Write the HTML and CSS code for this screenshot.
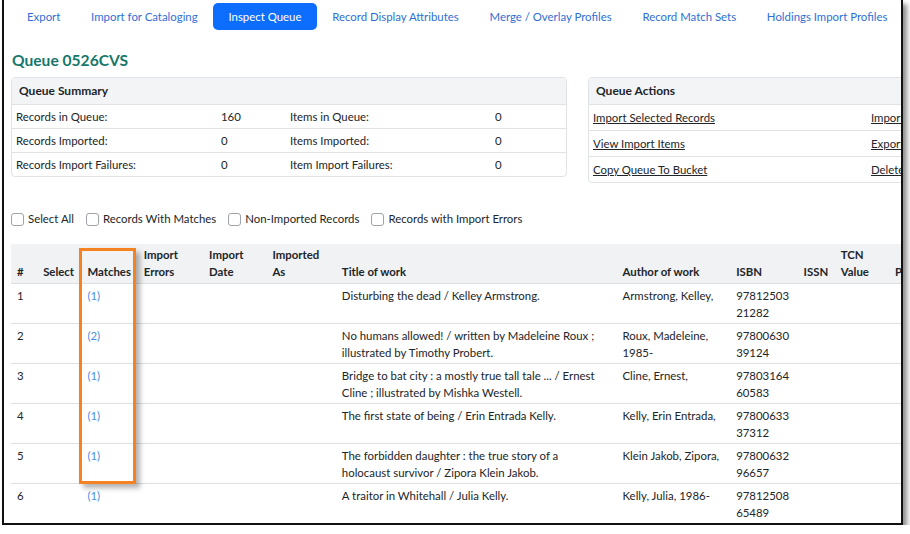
FILE: index.html
```html
<!DOCTYPE html>
<html lang="en">
<head>
  <meta charset="UTF-8" />
  <title>Inspect Queue</title>
  <link rel="stylesheet" href="styles.css">
</head>
<body>

<div class="shot">

  <nav class="tabs">
    <a href="#">Export</a>
    <a href="#">Import for Cataloging</a>
    <a href="#" class="active">Inspect Queue</a>
    <a href="#">Record Display Attributes</a>
    <a href="#">Merge / Overlay Profiles</a>
    <a href="#">Record Match Sets</a>
    <a href="#">Holdings Import Profiles</a>
  </nav>

  <h2 class="queue-title">Queue 0526CVS</h2>

  <div class="cards">
    <div class="card">
      <div class="card-head">Queue Summary</div>
      <table class="card-table">
        <tr>
          <td>Records in Queue:</td><td class="num">160</td>
          <td>Items in Queue:</td><td class="num">0</td>
        </tr>
        <tr>
          <td>Records Imported:</td><td class="num">0</td>
          <td>Items Imported:</td><td class="num">0</td>
        </tr>
        <tr>
          <td>Records Import Failures:</td><td class="num">0</td>
          <td>Item Import Failures:</td><td class="num">0</td>
        </tr>
      </table>
    </div>

    <div class="card actions">
      <div class="card-head">Queue Actions</div>
      <table class="card-table">
        <tr>
          <td><a href="#">Import Selected Records</a></td>
          <td><a href="#">Import All Records</a></td>
        </tr>
        <tr>
          <td><a href="#">View Import Items</a></td>
          <td><a href="#">Export Non-Imported Records</a></td>
        </tr>
        <tr>
          <td><a href="#">Copy Queue To Bucket</a></td>
          <td><a href="#">Delete Queue</a></td>
        </tr>
      </table>
    </div>
  </div>

  <div class="filters">
    <label><input type="checkbox"> Select All</label>
    <label><input type="checkbox"> Records With Matches</label>
    <label><input type="checkbox"> Non-Imported Records</label>
    <label><input type="checkbox"> Records with Import Errors</label>
  </div>

  <div class="grid-wrap">
    <table class="records">
      <colgroup>
        <col style="width:26px"><col style="width:44px"><col style="width:56px">
        <col style="width:65px"><col style="width:63px"><col style="width:69px">
        <col style="width:279px"><col style="width:113px"><col style="width:67px">
        <col style="width:37px"><col style="width:54px"><col style="width:140px">
      </colgroup>
      <thead>
        <tr>
          <th>#</th><th>Select</th><th>Matches</th><th>Import Errors</th>
          <th>Import Date</th><th>Imported As</th><th>Title of work</th>
          <th>Author of work</th><th>ISBN</th><th>ISSN</th><th>TCN Value</th><th>Publisher</th>
        </tr>
      </thead>
      <tbody>
        <tr>
          <td>1</td><td></td><td><a href="#" class="match">(1)</a></td><td></td><td></td><td></td>
          <td class="title">Disturbing the dead / Kelley Armstrong.</td>
          <td>Armstrong, Kelley,</td><td class="isbn">9781250321282</td><td></td><td></td><td></td>
        </tr>
        <tr>
          <td>2</td><td></td><td><a href="#" class="match">(2)</a></td><td></td><td></td><td></td>
          <td class="title">No humans allowed! / written by Madeleine Roux ; illustrated by Timothy Probert.</td>
          <td>Roux, Madeleine, 1985-</td><td class="isbn">9780063039124</td><td></td><td></td><td></td>
        </tr>
        <tr>
          <td>3</td><td></td><td><a href="#" class="match">(1)</a></td><td></td><td></td><td></td>
          <td class="title">Bridge to bat city : a mostly true tall tale ... / Ernest Cline ; illustrated by Mishka Westell.</td>
          <td>Cline, Ernest,</td><td class="isbn">9780316460583</td><td></td><td></td><td></td>
        </tr>
        <tr>
          <td>4</td><td></td><td><a href="#" class="match">(1)</a></td><td></td><td></td><td></td>
          <td class="title">The first state of being / Erin Entrada Kelly.</td>
          <td>Kelly, Erin Entrada,</td><td class="isbn">9780063337312</td><td></td><td></td><td></td>
        </tr>
        <tr>
          <td>5</td><td></td><td><a href="#" class="match">(1)</a></td><td></td><td></td><td></td>
          <td class="title">The forbidden daughter : the true story of a holocaust survivor / Zipora Klein Jakob.</td>
          <td>Klein Jakob, Zipora,</td><td class="isbn">9780063296657</td><td></td><td></td><td></td>
        </tr>
        <tr>
          <td>6</td><td></td><td><a href="#" class="match">(1)</a></td><td></td><td></td><td></td>
          <td class="title">A traitor in Whitehall / Julia Kelly.</td>
          <td>Kelly, Julia, 1986-</td><td class="isbn">9781250865489</td><td></td><td></td><td></td>
        </tr>
      </tbody>
    </table>
    <!-- annotation box round the Matches column -->
    <div class="highlight"></div>
  </div>

</div>

</body>
</html>
```

FILE: styles.css
```css
body {
  margin: 0;
  background: #fff;
  font-family: Lato, "Liberation Sans", sans-serif;
  font-size: 11.4px;
  color: #212529;
}
.shot {
  position: relative;
  margin-left: 2px;
  width: 901px;
  height: 525px;
  box-sizing: border-box;
  border: 2px solid #111;
  border-top: none;
  box-shadow: 4px 4px 5px rgba(0,0,0,0.45);
  overflow: hidden;
  padding: 3px 0 0 7px;
  background: #fff;
}
.tabs {
  display: flex;
  white-space: nowrap;
}
.tabs a {
  display: block;
  padding: 0 15.4px;
  line-height: 27px;
  color: #2f6fd6;
  text-decoration: none;
  border-radius: 5px;
}
.tabs a:first-child {
  padding-left: 16px;
}
.tabs a.active {
  background: #0d6efd;
  color: #fff;
}
.queue-title {
  margin: 0;
  padding: 20px 0 7px 1px;
  font-size: 15.6px;
  line-height: 20px;
  font-weight: 700;
  color: #16776a;
}
.cards {
  display: grid;
  grid-template-columns: 556px 556px;
  gap: 21px;
  align-items: start;
}
.card {
  border: 1px solid #dfe2e6;
  border-radius: 4px;
  overflow: hidden;
}
.card-head {
  background: #f3f4f6;
  padding: 0 7px;
  line-height: 26px;
  font-size: 12px;
  font-weight: 700;
  border-bottom: 1px solid #dfe2e6;
}
.card-table {
  width: 100%;
  border-collapse: collapse;
  table-layout: fixed;
}
.card-table td {
  padding: 0 4px;
  height: 23px;
  border-top: 1px solid #dfe2e6;
  white-space: nowrap;
}
.card-table tr:first-child td {
  border-top: none;
}
.card-table td:nth-child(1) { width: 197px; }
.card-table td:nth-child(2) { width: 61px; }
.card-table td:nth-child(3) { width: 197px; }
.actions .card-table td { width: 270px; height: 25px; }
.actions a {
  color: #212529;
}
.filters {
  display: flex;
  gap: 12px;
  margin: 28px 0 0 0;
  line-height: 16px;
}
.filters label {
  display: flex;
  align-items: center;
  gap: 4px;
}
.filters input {
  appearance: none;
  width: 13px;
  height: 13px;
  margin: 0;
  border: 1px solid #9ea3a9;
  border-radius: 3px;
  background: #fff;
}
.grid-wrap {
  position: relative;
  margin-top: 17px;
}
.records {
  width: 1019px;
  border-collapse: collapse;
  table-layout: fixed;
}
.records th {
  background: #f1f2f4;
  text-align: left;
  vertical-align: bottom;
  font-weight: 700;
  line-height: 17px;
  padding: 2px 6px 3px;
  height: 34px;
  border-bottom: 1px solid #dcdfe3;
}
.records td {
  vertical-align: top;
  line-height: 17px;
  padding: 3px 6px 2px;
  height: 34px;
  border-bottom: 1px solid #dcdfe3;
}
.records td.title {
  padding-right: 15px;
}
.records .isbn {
  word-break: break-all;
}
.match {
  color: #4a8ee0;
  text-decoration: none;
}
.highlight {
  position: absolute;
  left: 68px;
  top: 4px;
  width: 51px;
  height: 230px;
  border: 3px solid #f58220;
  box-shadow: 4px 4px 5px rgba(0,0,0,0.3);
}
```
